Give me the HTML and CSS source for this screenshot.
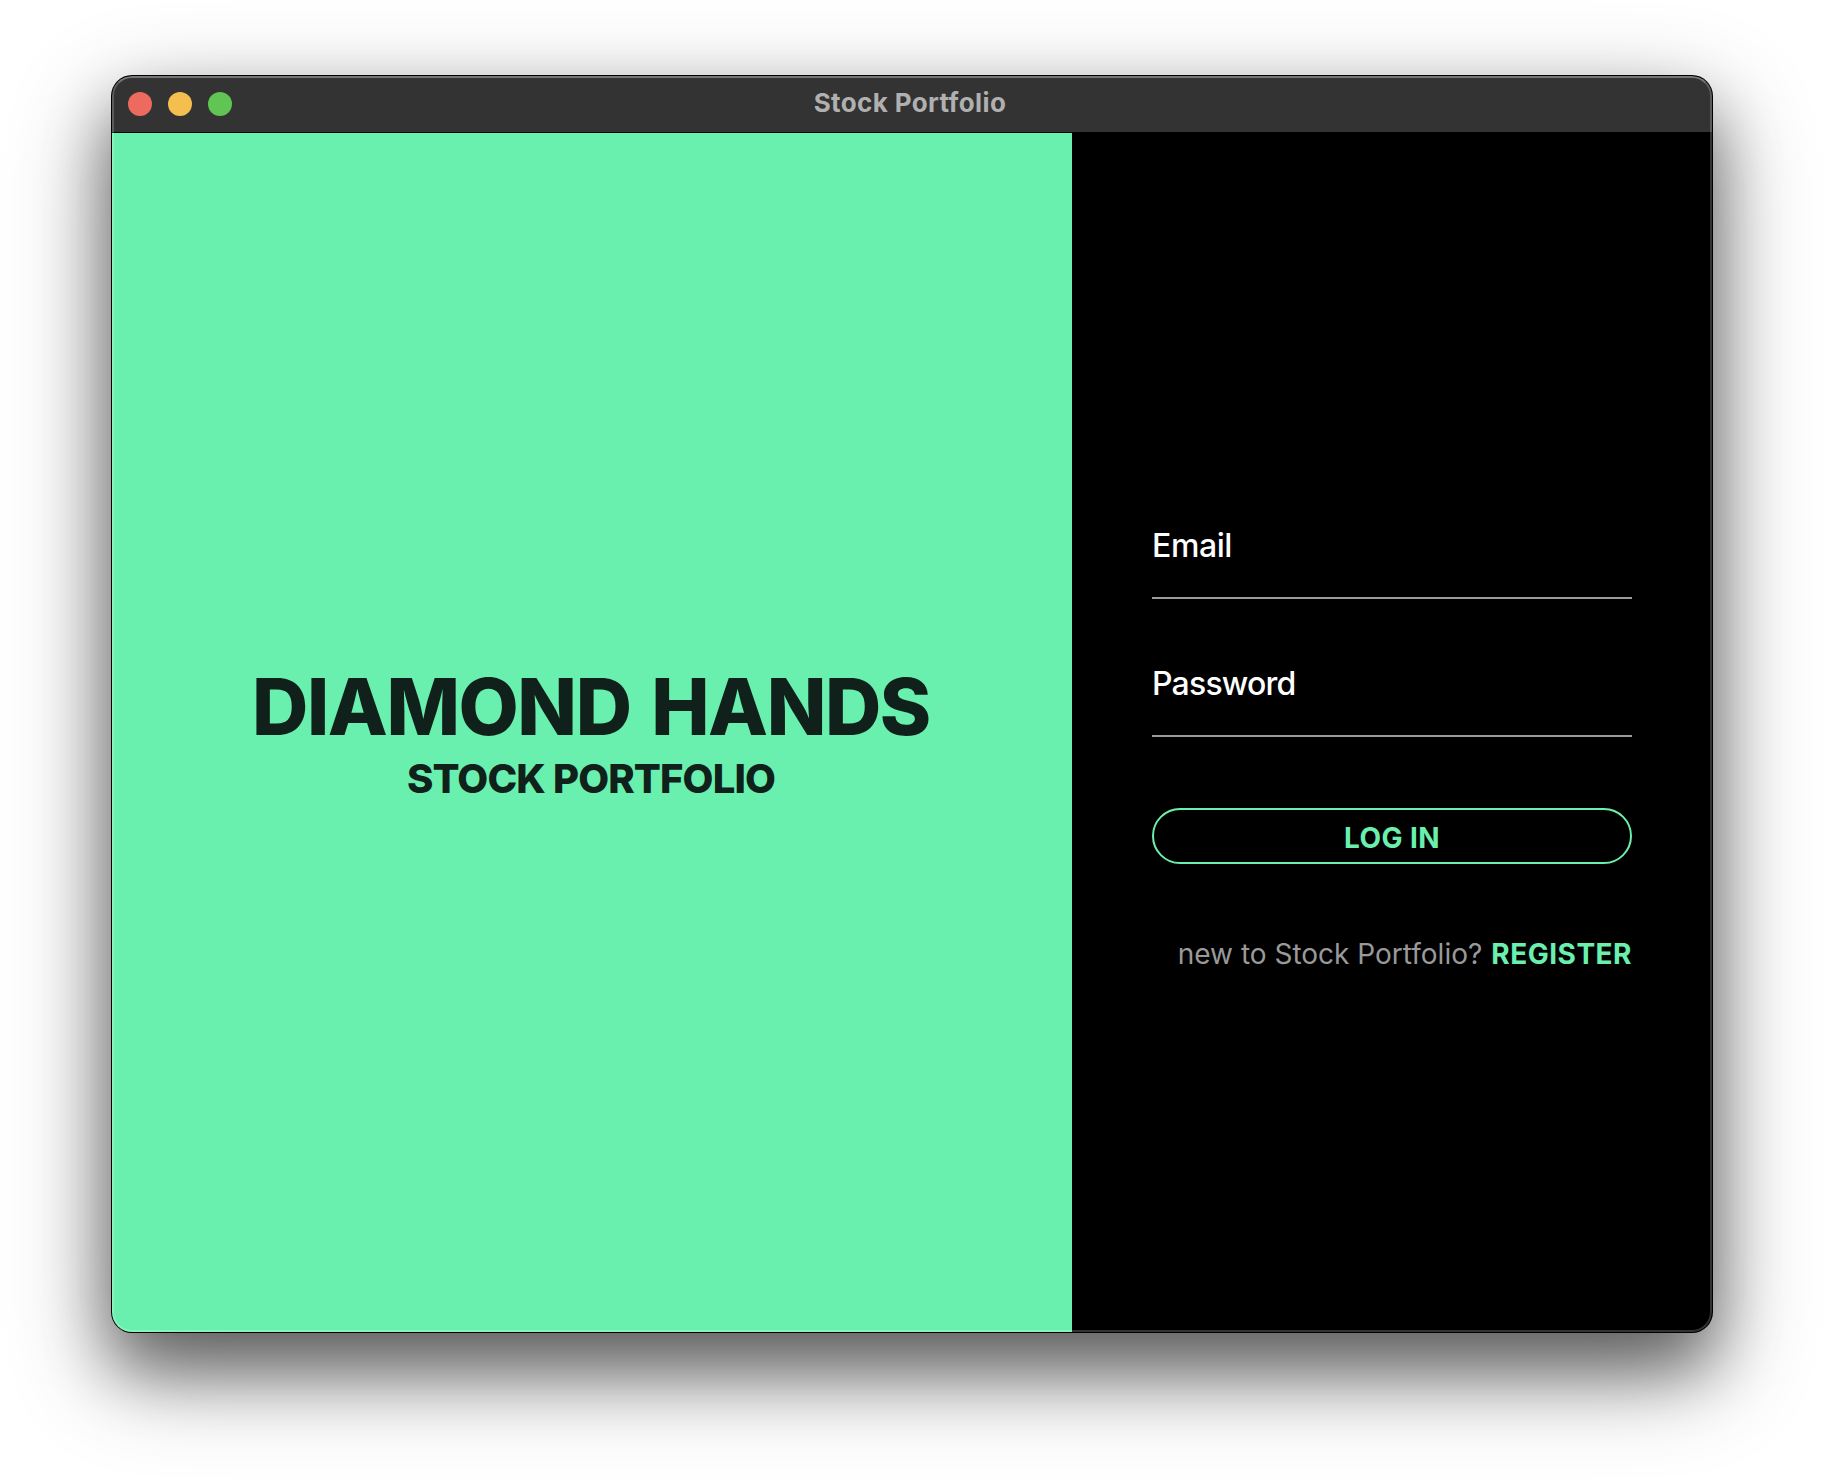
FILE: index.html
```html
<!DOCTYPE html>
<html lang="en">
<head>
<meta charset="utf-8">
<title>Stock Portfolio</title>
<link rel="stylesheet" href="styles.css">
</head>
<body>
<main class="window">
  <header class="titlebar">
    <div class="controls"><span class="dot red"></span><span class="dot yellow"></span><span class="dot green"></span></div>
    <div class="title"><span>Stock Portfolio</span></div>
  </header>
  <div class="content">
    <section class="brand">
      <h1 class="name"><span>DIAMOND HANDS</span></h1>
      <h2 class="tagline"><span>STOCK PORTFOLIO</span></h2>
    </section>
    <form class="login">
      <div class="field"><span>Email</span></div>
      <div class="field password"><span>Password</span></div>
      <button class="submit" type="button"><span>LOG IN</span></button>
      <p class="signup"><span class="hint">new to Stock Portfolio?</span><a class="register">REGISTER</a></p>
    </form>
  </div>
</main>
</body>
</html>
```
FILE: styles.css
```css
* { box-sizing: border-box; }
body {
  margin: 0;
  height: 1480px;
  padding: 76px 112px 0;
  overflow: hidden;
  background: #fff;
  font-family: Inter, "Liberation Sans", sans-serif;
}
.window {
  position: relative;
  width: 1600px;
  height: 1256px;
  border-radius: 20px;
  overflow: hidden;
  background: #000;
  box-shadow: 0 0 0 1px #000, 0 36px 64px rgba(0,0,0,.4), 0 36px 100px rgba(0,0,0,.44);
}
.window::after {
  content: "";
  position: absolute;
  inset: 0;
  border-radius: 20px;
  border: 2px solid rgba(255,255,255,.2);
  border-top-color: rgba(255,255,255,.33);
}
.titlebar {
  display: grid;
  grid-template-columns: 120px 1fr 140px;
  align-items: center;
  height: 57px;
  padding-left: 16px;
  background: #333;
  border-bottom: 1px solid #000;
}
.controls { display: flex; gap: 16px; }
.dot { width: 24px; height: 24px; border-radius: 50%; }
.red { background: #ec6a5e; }
.yellow { background: #f4bf4f; }
.green { background: #61c554; }
.title {
  padding-bottom: 3px;
  text-align: center;
  color: #b0b0b0;
  font-size: 26px;
  font-weight: 700;
  letter-spacing: .38px;
}
.content { display: flex; height: 1199px; }
.brand {
  width: 960px;
  padding: 530px 2px 0 0;
  background: #69f0ae;
  color: #10201a;
  text-align: center;
}
.name, .tagline { margin: 0; font-family: Inter, sans-serif; font-weight: 850; }
.name { font-size: 78px; line-height: 88px; letter-spacing: -1.45px; word-spacing: 5px; }
.tagline { font-size: 40px; line-height: 56px; letter-spacing: -.85px; }
.login { width: 640px; padding: 380px 80px 0; }
.field {
  height: 86px;
  margin-bottom: 52px;
  border-bottom: 2px solid #9b9b9b;
  color: #fff;
  font-size: 32px;
  font-weight: 450;
  line-height: 66px;
  letter-spacing: -.4px;
}
.password { letter-spacing: -.8px; }
.submit {
  display: block;
  width: 480px;
  height: 56px;
  margin-top: 71px;
  padding: 4px 0 0;
  border: 2px solid #69f0ae;
  border-radius: 28px;
  background: transparent;
  color: #69f0ae;
  font: 700 28px Inter, sans-serif;
  letter-spacing: .4px;
}
.signup {
  display: flex;
  justify-content: flex-end;
  gap: 9px;
  margin: 73px 0 0;
  font-size: 28px;
  line-height: 34px;
}
.hint { color: #999; }
.register { color: #69f0ae; font-weight: 700; letter-spacing: .5px; }
```
